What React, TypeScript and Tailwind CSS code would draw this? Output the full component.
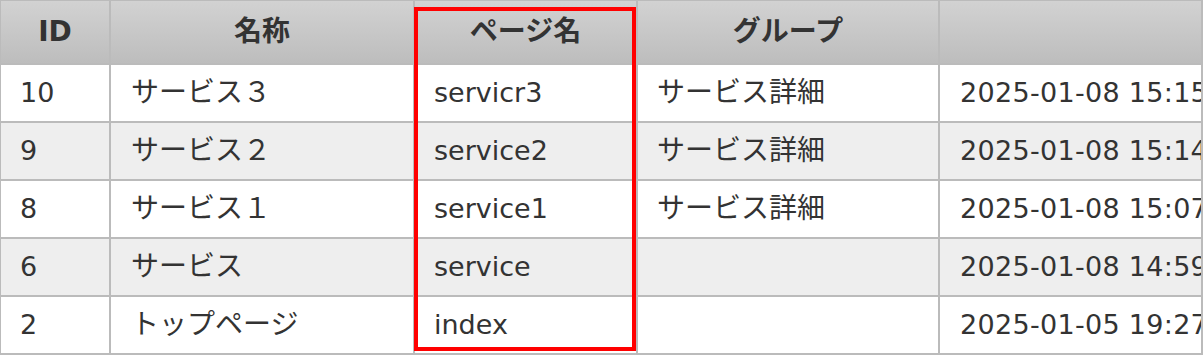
import React from "react";

const rows = [
  { id: "10", name: "サービス３", page: "servicr3", group: "サービス詳細", date: "2025-01-08 15:15:22" },
  { id: "9", name: "サービス２", page: "service2", group: "サービス詳細", date: "2025-01-08 15:14:10" },
  { id: "8", name: "サービス１", page: "service1", group: "サービス詳細", date: "2025-01-08 15:07:41" },
  { id: "6", name: "サービス", page: "service", group: "", date: "2025-01-08 14:59:03" },
  { id: "2", name: "トップページ", page: "index", group: "", date: "2025-01-05 19:27:15" },
];

const font = { fontFamily: '"DejaVu Sans", "Noto Sans CJK JP", sans-serif' };

export default function App() {
  return (
    <div className="relative w-[1203px] h-[355px] overflow-hidden bg-white" style={font}>
      <div className="ml-[-1px] mt-[-1px] w-[1204px] grid grid-cols-[108px_302px_221px_300px_261px] grid-rows-[62px_56px_56px_56px_56px_56px] gap-[2px] p-[2px] bg-[#bbbbbb] text-[27px] text-[#333333]">
        {["ID", "名称", "ページ名", "グループ", ""].map((h, i) => (
          <div
            key={i}
            className="flex items-center justify-center font-bold text-[28px] bg-gradient-to-b from-[#d2d2d2] to-[#bdbdbd]"
          >
            {h}
          </div>
        ))}
        {rows.map((r, i) => {
          const bg = i % 2 === 0 ? "bg-white" : "bg-[#eeeeee]";
          return (
            <React.Fragment key={r.id}>
              <div className={`flex items-center pl-[19px] ${bg}`}>{r.id}</div>
              <div className={`flex items-center pl-[20px] text-[28px] ${bg}`}>{r.name}</div>
              <div className={`flex items-center pl-[19px] ${bg}`}>{r.page}</div>
              <div className={`flex items-center pl-[19px] text-[28px] ${bg}`}>{r.group}</div>
              <div className={`flex items-center pl-[20px] whitespace-nowrap overflow-hidden tracking-[0.3px] ${bg}`}>{r.date}</div>
            </React.Fragment>
          );
        })}
      </div>
      <div className="absolute left-[414px] top-[7px] w-[222px] h-[344px] border-4 border-[#ff0000] pointer-events-none" />
    </div>
  );
}
